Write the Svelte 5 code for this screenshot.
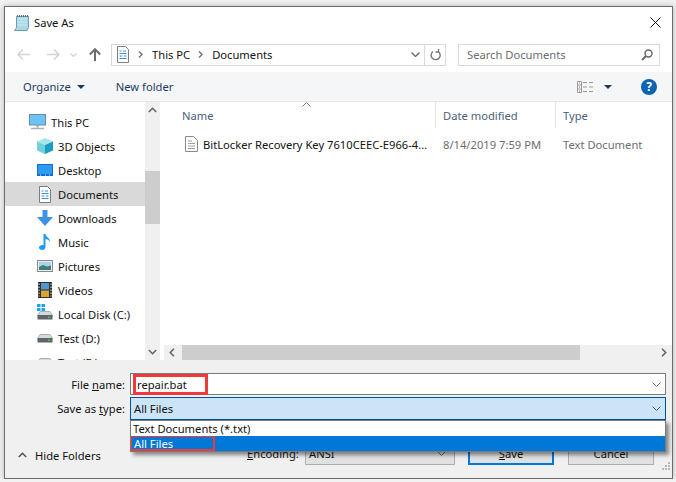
<script lang="ts">
	const places = [
		{ id: 'pc', label: 'This PC', top: true },
		{ id: 'cube', label: '3D Objects' },
		{ id: 'desktop', label: 'Desktop' },
		{ id: 'doc', label: 'Documents', active: true },
		{ id: 'down', label: 'Downloads' },
		{ id: 'music', label: 'Music' },
		{ id: 'pics', label: 'Pictures' },
		{ id: 'video', label: 'Videos' },
		{ id: 'c', label: 'Local Disk (C:)' },
		{ id: 'disk', label: 'Test (D:)' },
		{ id: 'disk', label: 'Test (E:)' }
	];
</script>

{#snippet docIcon()}
	<svg width="14" height="17" viewBox="0 0 14 17">
		<path d="M1.500.500h8l3 3v13h-11z" fill="#fff" stroke="#7d7d7d" />
		<path d="M3.500 5h2M7 5h3M3.500 7.500h7M3.500 10h3M8 10h2.500M3.500 12.500h7" stroke="#3b8fd6" />
	</svg>
{/snippet}

{#snippet disk()}
	<svg width="16" height="9" viewBox="0 0 16 9">
		<path d="M3 .5h10l2.500 4h-15z" fill="#d8d8d8" stroke="#b0b0b0" />
		<rect x="0.500" y="4" width="15" height="4.500" fill="#5f6468" />
		<rect x="11" y="5.500" width="2" height="1.500" fill="#3fd14b" />
	</svg>
{/snippet}

{#snippet placeIcon(id: string)}
	{#if id === 'pc'}
		<svg width="17" height="16" viewBox="0 0 17 16">
			<rect x="0.500" y="0.500" width="16" height="10.500" fill="#6cc4f5" stroke="#6b8ba3" />
			<path d="M8.500 11v2.500" stroke="#9aa5ad" stroke-width="2" />
			<path d="M2 14.500h13" stroke="#a9b2b8" stroke-width="1.500" />
		</svg>
	{:else if id === 'cube'}
		<svg width="16" height="16" viewBox="0 0 16 16">
			<path d="M8 0l8 3.500-8 3.500-8-3.500z" fill="#a5e6ea" />
			<path d="M0 3.500l8 3.500v9l-8-3.500z" fill="#6fd0d8" />
			<path d="M16 3.500l-8 3.500v9l8-3.500z" fill="#1b9cc0" />
		</svg>
	{:else if id === 'desktop'}
		<svg width="16" height="12" viewBox="0 0 16 12">
			<rect width="16" height="12" fill="#0a6fd0" />
			<rect x="1" y="1" width="14" height="9" fill="#2f9bf0" />
			<path d="M3 11h1M8 11h1M12 11h1" stroke="#dfefff" />
		</svg>
	{:else if id === 'doc'}
		{@render docIcon()}
	{:else if id === 'down'}
		<svg width="16" height="16" viewBox="0 0 16 16">
			<path d="M5.500 0h5v7H16l-8 9-8-9h5.500z" fill="#3d93e0" />
		</svg>
	{:else if id === 'music'}
		<svg width="12" height="16" viewBox="0 0 12 16">
			<path d="M4.500 0h2c0 3 5 4 4.500 8-.8-2-3-2.800-4.500-3v8c0 1.800-1.500 3-3.500 3C1.200 16 0 15 0 13.600 0 12 1.800 11 3.500 11c.4 0 .7 0 1 .2z" fill="#1e9bf0" />
		</svg>
	{:else if id === 'pics'}
		<svg width="16" height="12" viewBox="0 0 16 12">
			<rect x="0.500" y="0.500" width="15" height="11" fill="#e8eef0" stroke="#8a8a8a" />
			<rect x="2" y="2" width="12" height="8" fill="#a9d3e8" />
			<path d="M2 7l4-2 4 1.500 4-1V10H2z" fill="#3f7f78" />
		</svg>
	{:else if id === 'video'}
		<svg width="14" height="16" viewBox="0 0 14 16">
			<rect width="14" height="16" fill="#2f2f2f" />
			<rect x="3" y="1" width="8" height="6.500" fill="#4c9ad0" />
			<rect x="3" y="8.500" width="8" height="6.500" fill="#d9a52e" />
			<path d="M1 1.500v13M13 1.500v13" stroke="#e8e8e8" stroke-dasharray="1.500 1.500" />
		</svg>
	{:else if id === 'c'}
		<span class="disk-c">
			<svg width="8" height="7" viewBox="0 0 8 7"><path d="M0 0h3.500v3H0zM4.500 0H8v3H4.500zM0 4h3.500v3H0zM4.500 4H8v3H4.500z" fill="#19a4ee" /></svg>
			{@render disk()}
		</span>
	{:else}
		{@render disk()}
	{/if}
{/snippet}

<div class="dialog">
	<header class="title">
		<svg width="15" height="17" viewBox="0 0 15 17">
			<path d="M2.500 2.500h12v11l-1.500 3H.5l2-3z" fill="#a9d8e6" stroke="#6f9db0" />
			<path d="M4 5h9M3.500 8h9M3.500 11h9" stroke="#d2ecf3" />
			<path d="M3.500 1v2M5.500 1v2M7.500 1v2M9.500 1v2M11.500 1v2M13.500 1v2" stroke="#666" />
		</svg>
		<span>Save As</span>
		<svg class="close" width="11" height="11" viewBox="0 0 11 11"><path d="M.5.500l10 10M10.500.500l-10 10" stroke="#111" fill="none" /></svg>
	</header>

	<div class="nav-row">
		<div class="arrows">
			<svg width="13" height="11" viewBox="0 0 13 11"><path d="M6 .5l-5 5 5 5M1 5.500h12" stroke="#d4d4d4" stroke-width="1.500" fill="none" /></svg>
			<svg width="13" height="11" viewBox="0 0 13 11"><path d="M7 .5l5 5-5 5M12 5.500H0" stroke="#d4d4d4" stroke-width="1.500" fill="none" /></svg>
			<svg width="7" height="4" viewBox="0 0 7 4"><path d="M.5.500l3 3 3-3" stroke="#d4d4d4" stroke-width="1.200" fill="none" /></svg>
			<svg width="12" height="13" viewBox="0 0 12 13"><path d="M.8 6.500L6 1.200l5.200 5.300M6 1.500V13" stroke="#6e6e6e" stroke-width="2" fill="none" /></svg>
		</div>
		<div class="address">
			<span class="crumb-icon">{@render docIcon()}</span>
			<svg class="sep" width="5" height="7" viewBox="0 0 5 7"><path d="M1 .5l3 3-3 3" stroke="#777" stroke-width="1.500" fill="none" /></svg>
			<span>This PC</span>
			<svg class="sep" width="5" height="7" viewBox="0 0 5 7"><path d="M1 .5l3 3-3 3" stroke="#777" stroke-width="1.500" fill="none" /></svg>
			<span>Documents</span>
			<svg class="addr-chevron" width="9" height="5" viewBox="0 0 9 5"><path d="M.5.500l4 4 4-4" stroke="#666" stroke-width="1.300" fill="none" /></svg>
			<div class="refresh">
				<svg width="11" height="12" viewBox="0 0 11 12"><path d="M3 2.500a4.500 4.500 0 1 0 5-.2M8.500 0v3H5.500" stroke="#777" stroke-width="1.400" fill="none" /></svg>
			</div>
		</div>
		<div class="search">
			<span>Search Documents</span>
			<svg width="12" height="12" viewBox="0 0 12 12"><circle cx="7.500" cy="4.500" r="3.500" stroke="#666" stroke-width="1.400" fill="none" /><path d="M5 7l-4 4" stroke="#666" stroke-width="2" /></svg>
		</div>
	</div>

	<div class="toolbar">
		<span class="tool">Organize</span>
		<span class="caret"></span>
		<span class="tool new-folder">New folder</span>
		<svg class="views" width="17" height="12" viewBox="0 0 17 12">
			<path d="M.5.500h4v11h-4zM.5 4h4M.5 8h4" stroke="#9a9a9a" fill="#fff" />
			<path d="M6 1.500h4M12 1.500h4M6 6h4M12 6h4M6 10.500h4M12 10.500h4" stroke="#9a9a9a" />
			<path d="M2 2h1M2 6h1M2 10h1" stroke="#d6403a" />
		</svg>
		<span class="caret views-caret"></span>
		<span class="help">?</span>
	</div>

	<div class="browser">
		<nav class="places">
			{#each places as p}
				<div class="place" class:active={p.active} class:top={p.top}>
					<span class="place-icon">{@render placeIcon(p.id)}</span>
					<span>{p.label}</span>
				</div>
			{/each}
		</nav>
		<div class="vscroll">
			<svg width="9" height="6" viewBox="0 0 9 6"><path d="M.8 5L4.500 1.300 8.200 5" stroke="#666" stroke-width="1.600" fill="none" /></svg>
			<div class="vtrack"><div class="vthumb"></div></div>
			<svg width="9" height="6" viewBox="0 0 9 6"><path d="M.8 1L4.500 4.700 8.200 1" stroke="#666" stroke-width="1.600" fill="none" /></svg>
		</div>
		<div class="files">
			<div class="file-grid">
				<div class="head name-head">Name<svg class="sort" width="9" height="5" viewBox="0 0 9 5"><path d="M.5 4.500l4-4 4 4" stroke="#777" fill="none" /></svg></div>
				<div class="head">Date modified</div>
				<div class="head">Type</div>
				<div class="cell file-name">
					<svg width="13" height="16" viewBox="0 0 13 16">
						<path d="M.5.500h8l4 4v11H.5z" fill="#fff" stroke="#8a8a8a" />
						<path d="M3 5h4M3 7.500h7M3 10h7M3 12.500h7" stroke="#a0a0a0" />
					</svg>
					<span>BitLocker Recovery Key 7610CEEC-E966-4...</span>
				</div>
				<div class="cell muted">8/14/2019 7:59 PM</div>
				<div class="cell muted">Text Document</div>
			</div>
			<div class="hscroll">
				<svg width="6" height="9" viewBox="0 0 6 9"><path d="M5 .8L1.300 4.500 5 8.200" stroke="#666" stroke-width="1.600" fill="none" /></svg>
				<div class="htrack"><div class="hthumb"></div></div>
				<svg width="6" height="9" viewBox="0 0 6 9"><path d="M1 .8l3.700 3.700L1 8.200" stroke="#666" stroke-width="1.600" fill="none" /></svg>
			</div>
		</div>
	</div>

	<div class="form">
		<div class="field">
			<label for="fname">File <u>n</u>ame:</label>
			<div class="combo" id="fname">
				<span class="marked">repair.bat</span>
				<svg width="9" height="5" viewBox="0 0 9 5"><path d="M.5.500l4 4 4-4" stroke="#666" fill="none" /></svg>
			</div>
		</div>
		<div class="field">
			<label for="ftype">Save as <u>t</u>ype:</label>
			<div class="combo open" id="ftype">
				<span>All Files</span>
				<svg width="9" height="5" viewBox="0 0 9 5"><path d="M.5.500l4 4 4-4" stroke="#555" fill="none" /></svg>
				<div class="dropdown">
					<div class="option">Text Documents (*.txt)</div>
					<div class="option selected"><span>All Files</span></div>
				</div>
			</div>
		</div>
		<div class="footer">
			<span class="hide-folders">
				<svg width="9" height="6" viewBox="0 0 9 6"><path d="M.8 5L4.500 1.300 8.200 5" stroke="#555" stroke-width="1.600" fill="none" /></svg>
				Hide Folders
			</span>
			<span class="encoding"><u>E</u>ncoding:</span>
			<div class="enc-select">
				<span>ANSI</span>
				<svg width="9" height="5" viewBox="0 0 9 5"><path d="M.5.500l4 4 4-4" stroke="#666" fill="none" /></svg>
			</div>
			<div class="btn primary"><span><u>S</u>ave</span></div>
			<div class="btn">Cancel</div>
			<svg class="grip" width="9" height="9" viewBox="0 0 9 9"><path d="M7 1h2v2H7zM4 4h2v2H4zM7 4h2v2H7zM1 7h2v2H1zM4 7h2v2H4zM7 7h2v2H7z" fill="#b8b8b8" /></svg>
		</div>
	</div>
</div>

<style>
	:global(body) {
		background: #f2f2f2;
		font-family: 'Noto Sans', 'Open Sans', sans-serif;
		font-size: 11.2px;
		color: #111;
	}

	.dialog {
		box-sizing: border-box;
		width: 669px;
		height: 473px;
		margin: 6px 0 0 4px;
		border: 1px solid #6b6b6b;
		background: #fff;
		display: flex;
		flex-direction: column;
		box-shadow: 0 0 6px rgba(0, 0, 0, 0.25);
	}

	.title {
		height: 30px;
		display: flex;
		align-items: center;
		gap: 5px;
		padding: 0 11px 0 9px;
		flex: none;
	}

	.close {
		margin-left: auto;
	}

	.nav-row {
		height: 35px;
		flex: none;
		display: flex;
		align-items: center;
	}

	.arrows {
		width: 106px;
		display: flex;
		align-items: center;
		padding-left: 12px;
		box-sizing: border-box;
	}

	.arrows svg:nth-child(2) {
		margin-left: 17px;
	}

	.arrows svg:nth-child(3) {
		margin-left: 10px;
	}

	.arrows svg:nth-child(4) {
		margin-left: 12px;
	}

	.address {
		box-sizing: border-box;
		width: 335px;
		height: 22px;
		border: 1px solid #d9d9d9;
		display: flex;
		align-items: center;
	}

	.crumb-icon {
		display: flex;
		margin-left: 4px;
	}

	.sep {
		margin: 0 9px 0 8px;
	}

	.addr-chevron {
		margin-left: auto;
		margin-right: 4px;
	}

	.refresh {
		width: 20px;
		height: 100%;
		border-left: 1px solid #d9d9d9;
		display: flex;
		align-items: center;
		justify-content: center;
	}

	.search {
		box-sizing: border-box;
		width: 202px;
		height: 22px;
		margin-left: 12px;
		border: 1px solid #d9d9d9;
		display: flex;
		align-items: center;
		justify-content: space-between;
		padding: 0 6px 0 8px;
		color: #6d6d6d;
	}

	.toolbar {
		height: 30px;
		flex: none;
		background: #f5f6f7;
		border-bottom: 1px solid #e5e5e5;
		box-sizing: border-box;
		display: flex;
		align-items: center;
		padding-left: 18px;
	}

	.tool {
		color: #1e3a5f;
	}

	.caret {
		width: 0;
		height: 0;
		margin-left: 6px;
		border-left: 4px solid transparent;
		border-right: 4px solid transparent;
		border-top: 4px solid #1e3a5f;
	}

	.new-folder {
		margin-left: 31px;
	}

	.views {
		margin-left: auto;
	}

	.views-caret {
		margin-left: 10px;
	}

	.help {
		width: 16px;
		height: 16px;
		margin: 0 15px 0 29px;
		border-radius: 50%;
		background: #0a64b4;
		color: #fff;
		font-size: 12px;
		font-weight: 700;
		text-align: center;
		line-height: 16px;
	}

	.browser {
		height: 258px;
		flex: none;
		display: flex;
		overflow: hidden;
	}

	.places {
		width: 140px;
		flex: none;
		overflow: hidden;
	}

	.place {
		height: 24px;
		display: flex;
		align-items: center;
		padding-left: 31px;
		gap: 5px;
	}

	.place.top {
		margin-top: 8px;
		padding-left: 24px;
	}

	.place.active {
		background: #d9d9d9;
	}

	.place-icon {
		width: 17px;
		display: flex;
		justify-content: center;
		align-items: center;
	}

	.disk-c {
		position: relative;
		display: flex;
		padding-top: 3px;
	}

	.disk-c svg:first-child {
		position: absolute;
		left: 0;
		top: -4px;
	}

	.vscroll {
		width: 15px;
		flex: none;
		background: #f0f0f0;
		display: flex;
		flex-direction: column;
		align-items: center;
		padding: 5px 0;
		box-sizing: border-box;
	}

	.vtrack {
		flex: 1;
		width: 100%;
		padding-top: 58px;
		box-sizing: border-box;
	}

	.vthumb {
		height: 53px;
		background: #cdcdcd;
	}

	.files {
		flex: 1;
		margin-left: 4px;
		display: flex;
		flex-direction: column;
		min-width: 0;
	}

	.file-grid {
		flex: 1;
		display: grid;
		grid-template-columns: 272px 120px 1fr;
		grid-template-rows: 26px 32px;
		align-content: start;
	}

	.head {
		color: #4c607a;
		padding-left: 7px;
		border-right: 1px solid #e5e5e5;
		display: flex;
		align-items: center;
		position: relative;
	}

	.head:nth-child(3) {
		border-right: none;
	}

	.name-head {
		padding-left: 18px;
	}

	.sort {
		position: absolute;
		left: 138px;
		top: 0;
	}

	.cell {
		display: flex;
		align-items: center;
		padding-left: 7px;
		white-space: nowrap;
	}

	.file-name {
		padding-left: 21px;
		gap: 5px;
	}

	.file-name svg {
		flex: none;
	}

	.muted {
		color: #6d6d6d;
	}

	.hscroll {
		height: 15px;
		flex: none;
		display: flex;
		align-items: center;
		background: #f0f0f0;
		padding: 0 5px;
	}

	.htrack {
		flex: 1;
		padding: 0 81px 0 7px;
	}

	.hthumb {
		height: 15px;
		background: #cdcdcd;
	}

	.form {
		flex: 1;
		background: #f0f0f0;
		padding-top: 13px;
		position: relative;
		min-height: 0;
	}

	.field {
		display: flex;
		align-items: center;
		height: 22px;
		margin-bottom: 2px;
	}

	.field label {
		width: 120px;
		text-align: right;
		flex: none;
	}

	.combo {
		box-sizing: border-box;
		width: 536px;
		height: 22px;
		margin-left: 5px;
		border: 1px solid #7a7a7a;
		background: #fff;
		display: flex;
		align-items: center;
		justify-content: space-between;
		padding-right: 4px;
		position: relative;
	}

	.combo.open {
		height: 23px;
		border-color: #005499;
		background: #cce4f7;
		padding-left: 3px;
	}

	.marked {
		box-sizing: border-box;
		width: 75px;
		height: 21px;
		margin-left: 2px;
		border: 3px solid #f03a3a;
		padding-left: 1px;
		line-height: 15px;
	}

	.dropdown {
		position: absolute;
		left: -1px;
		right: -1px;
		top: 22px;
		height: 32px;
		box-sizing: border-box;
		background: #fff;
		border: 1px solid #7a7a7a;
		box-shadow: 3px 3px 4px rgba(0, 0, 0, 0.45);
		z-index: 2;
	}

	.option {
		height: 15px;
		line-height: 15px;
		padding-left: 2px;
	}

	.option.selected {
		background: #0078d7;
		color: #fff;
		padding-left: 0;
	}

	.option.selected span {
		display: block;
		box-sizing: border-box;
		width: 84px;
		height: 15px;
		padding-left: 2px;
		line-height: 13px;
		border: 2px solid #f03a3a;
		border-top-width: 1px;
		border-left-width: 1px;
	}

	.footer {
		display: flex;
		align-items: center;
		height: 24px;
		margin-top: 22px;
		position: relative;
	}

	.hide-folders {
		display: flex;
		align-items: center;
		gap: 8px;
		padding-left: 13px;
		width: 242px;
		box-sizing: border-box;
		margin-top: 4px;
	}

	.encoding {
		width: 58px;
	}

	.enc-select {
		box-sizing: border-box;
		width: 150px;
		height: 24px;
		background: #e1e1e1;
		border: 1px solid #adadad;
		display: flex;
		align-items: center;
		justify-content: space-between;
		padding: 0 8px 0 3px;
	}

	.btn {
		box-sizing: border-box;
		width: 86px;
		height: 24px;
		margin-left: 14px;
		background: #e1e1e1;
		border: 1px solid #adadad;
		display: flex;
		align-items: center;
		justify-content: center;
	}

	.btn.primary {
		border: 2px solid #0078d7;
		margin-left: 13px;
	}

	.grip {
		position: absolute;
		right: 2px;
		bottom: -5px;
	}
</style>
